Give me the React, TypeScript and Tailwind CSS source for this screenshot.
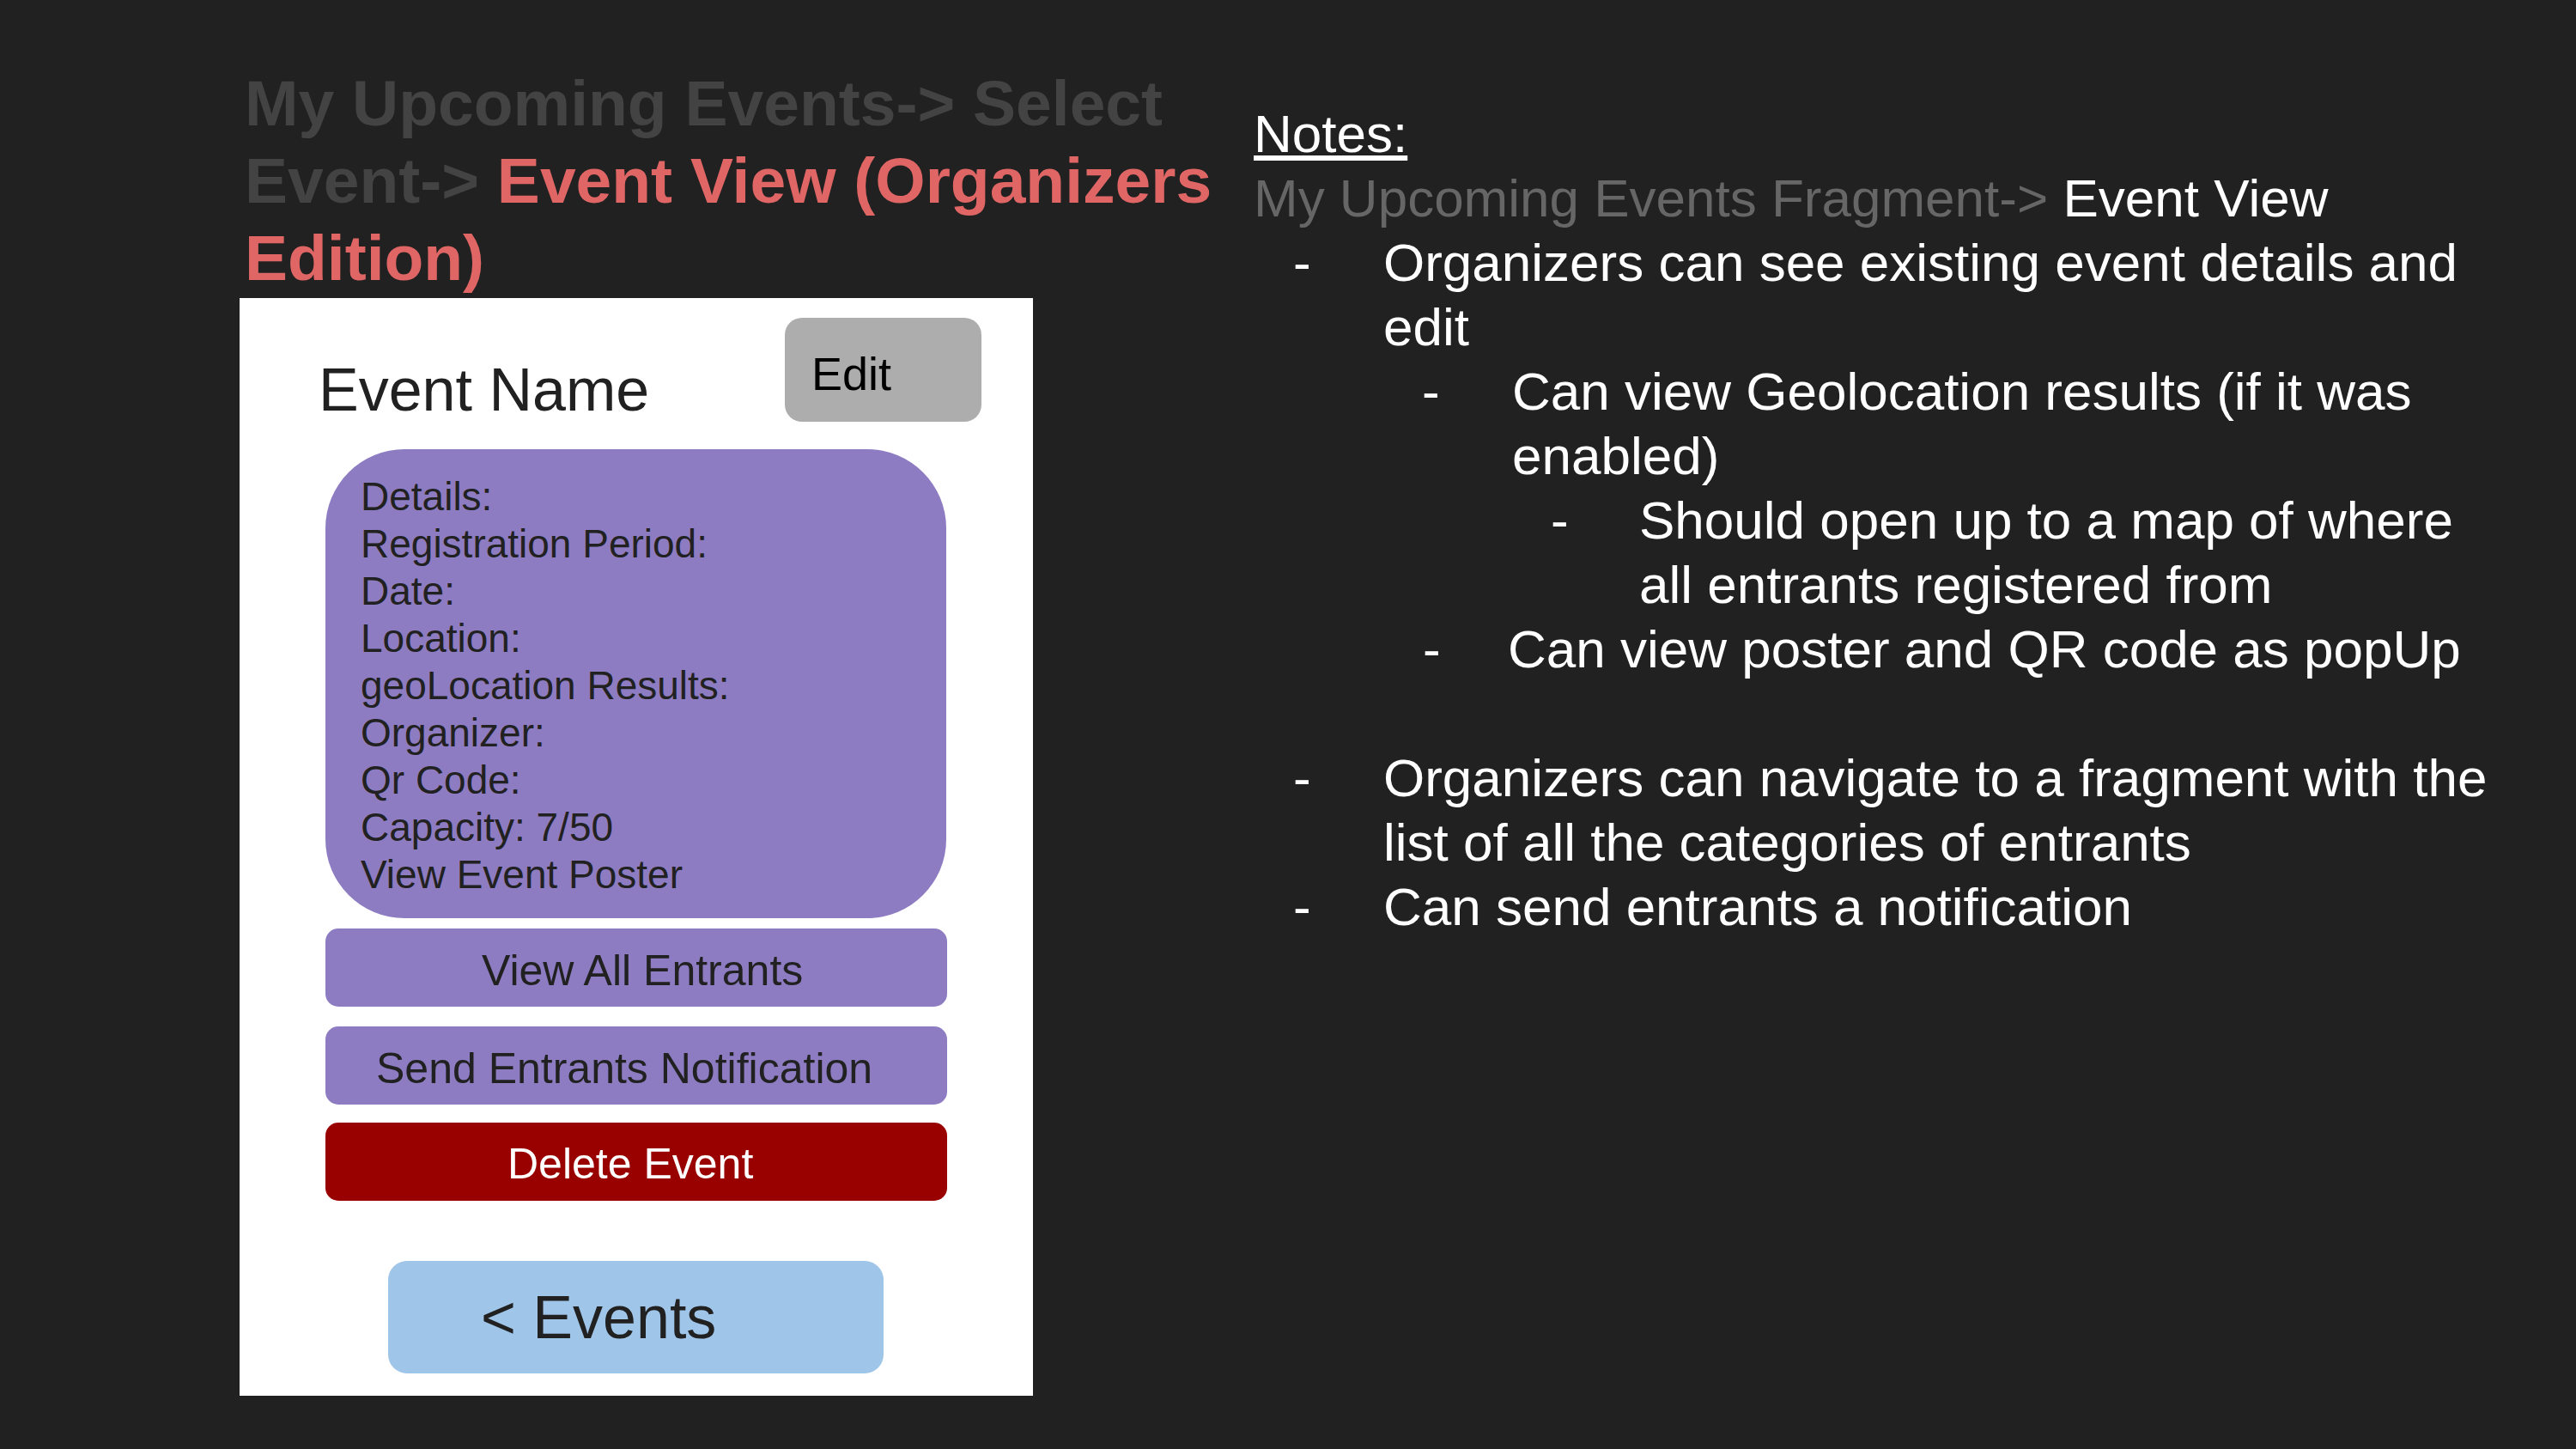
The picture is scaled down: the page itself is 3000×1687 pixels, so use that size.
import React from "react";

const font = "font-['Liberation_Sans',Arial,Helvetica,sans-serif]";

function Bullet({ indent, dashW, children }: { indent: string; dashW: string; children: React.ReactNode }) {
  return (
    <div className={`flex ${indent}`}>
      <span className={`${dashW} shrink-0`}>-</span>
      <div className="flex-1">{children}</div>
    </div>
  );
}

export default function App() {
  return (
    <div className={`w-[3000px] h-[1687px] bg-[#212121] flex items-start overflow-hidden ${font}`}>
      {/* Left column */}
      <div className="ml-[279px] mt-[75px] w-[924px] flex flex-col shrink-0">
        <div className="pl-[6px] w-[1150px] text-[75px] leading-[90px] font-bold text-[#434343]">
          <div>My Upcoming Events-&gt; Select</div>
          <div>
            Event-&gt; <span className="text-[#e06666]">Event View (Organizers</span>
          </div>
          <div className="text-[#e06666]">Edition)</div>
        </div>

        <div className="mt-[2px] w-[924px] h-[1278px] bg-white flex flex-col">
          {/* header */}
          <div className="flex items-start">
            <div className="ml-[92px] mt-[72px] text-[70px] leading-[70px] text-[#212121]">Event Name</div>
            <div className="ml-auto mr-[60px] mt-[23px] w-[229px] h-[121px] rounded-[20px] bg-[#adadad] pl-[31px] pt-[38px] text-[54px] leading-[54px] text-black">
              Edit
            </div>
          </div>

          {/* details */}
          <div className="ml-[100px] mt-[32px] w-[723px] h-[546px] rounded-[92px] bg-[#8e7cc3] pl-[41px] pt-[28px] text-[46px] leading-[55px] text-[#212121]">
            <div>Details:</div>
            <div>Registration Period:</div>
            <div>Date:</div>
            <div>Location:</div>
            <div>geoLocation Results:</div>
            <div>Organizer:</div>
            <div>Qr Code:</div>
            <div>Capacity: 7/50</div>
            <div>View Event Poster</div>
          </div>

          <div className="ml-[100px] mt-[12px] w-[724px] h-[91px] rounded-[15px] bg-[#8e7cc3] flex items-center pl-[182px] pt-[6px] text-[50px] leading-[50px] text-[#212121]">
            View All Entrants
          </div>
          <div className="ml-[100px] mt-[23px] w-[724px] h-[91px] rounded-[15px] bg-[#8e7cc3] flex items-center pl-[59px] pt-[6px] text-[50px] leading-[50px] text-[#212121]">
            Send Entrants Notification
          </div>
          <div className="ml-[100px] mt-[21px] w-[724px] h-[91px] rounded-[15px] bg-[#990000] flex items-center pl-[212px] pt-[4px] text-[50px] leading-[50px] text-white">
            Delete Event
          </div>

          <div className="ml-[173px] mt-[70px] w-[577px] h-[131px] rounded-[22px] bg-[#9fc5e8] pl-[108px] pt-[31px] text-[70px] leading-[70px] text-[#212121]">
            &lt; Events
          </div>
        </div>
      </div>

      {/* Notes column */}
      <div className="ml-[257px] mt-[118px] w-[1460px] text-[62px] leading-[75px] text-white">
        <div>
          <span className="underline">Notes:</span>
        </div>
        <div>
          <span className="text-[#666666]">My Upcoming Events Fragment-&gt; </span>Event View
        </div>
        <Bullet indent="pl-[46px]" dashW="w-[105px]">
          Organizers can see existing event details and edit
        </Bullet>
        <Bullet indent="pl-[196px]" dashW="w-[105px]">
          Can view Geolocation results (if it was enabled)
        </Bullet>
        <Bullet indent="pl-[346px]" dashW="w-[103px]">
          Should open up to a map of where all entrants registered from
        </Bullet>
        <Bullet indent="pl-[197px]" dashW="w-[99px]">
          Can view poster and QR code as popUp
        </Bullet>
        <div className="h-[75px]" />
        <Bullet indent="pl-[46px]" dashW="w-[105px]">
          Organizers can navigate to a fragment with the list of all the categories of entrants
        </Bullet>
        <Bullet indent="pl-[46px]" dashW="w-[105px]">
          Can send entrants a notification
        </Bullet>
      </div>
    </div>
  );
}
